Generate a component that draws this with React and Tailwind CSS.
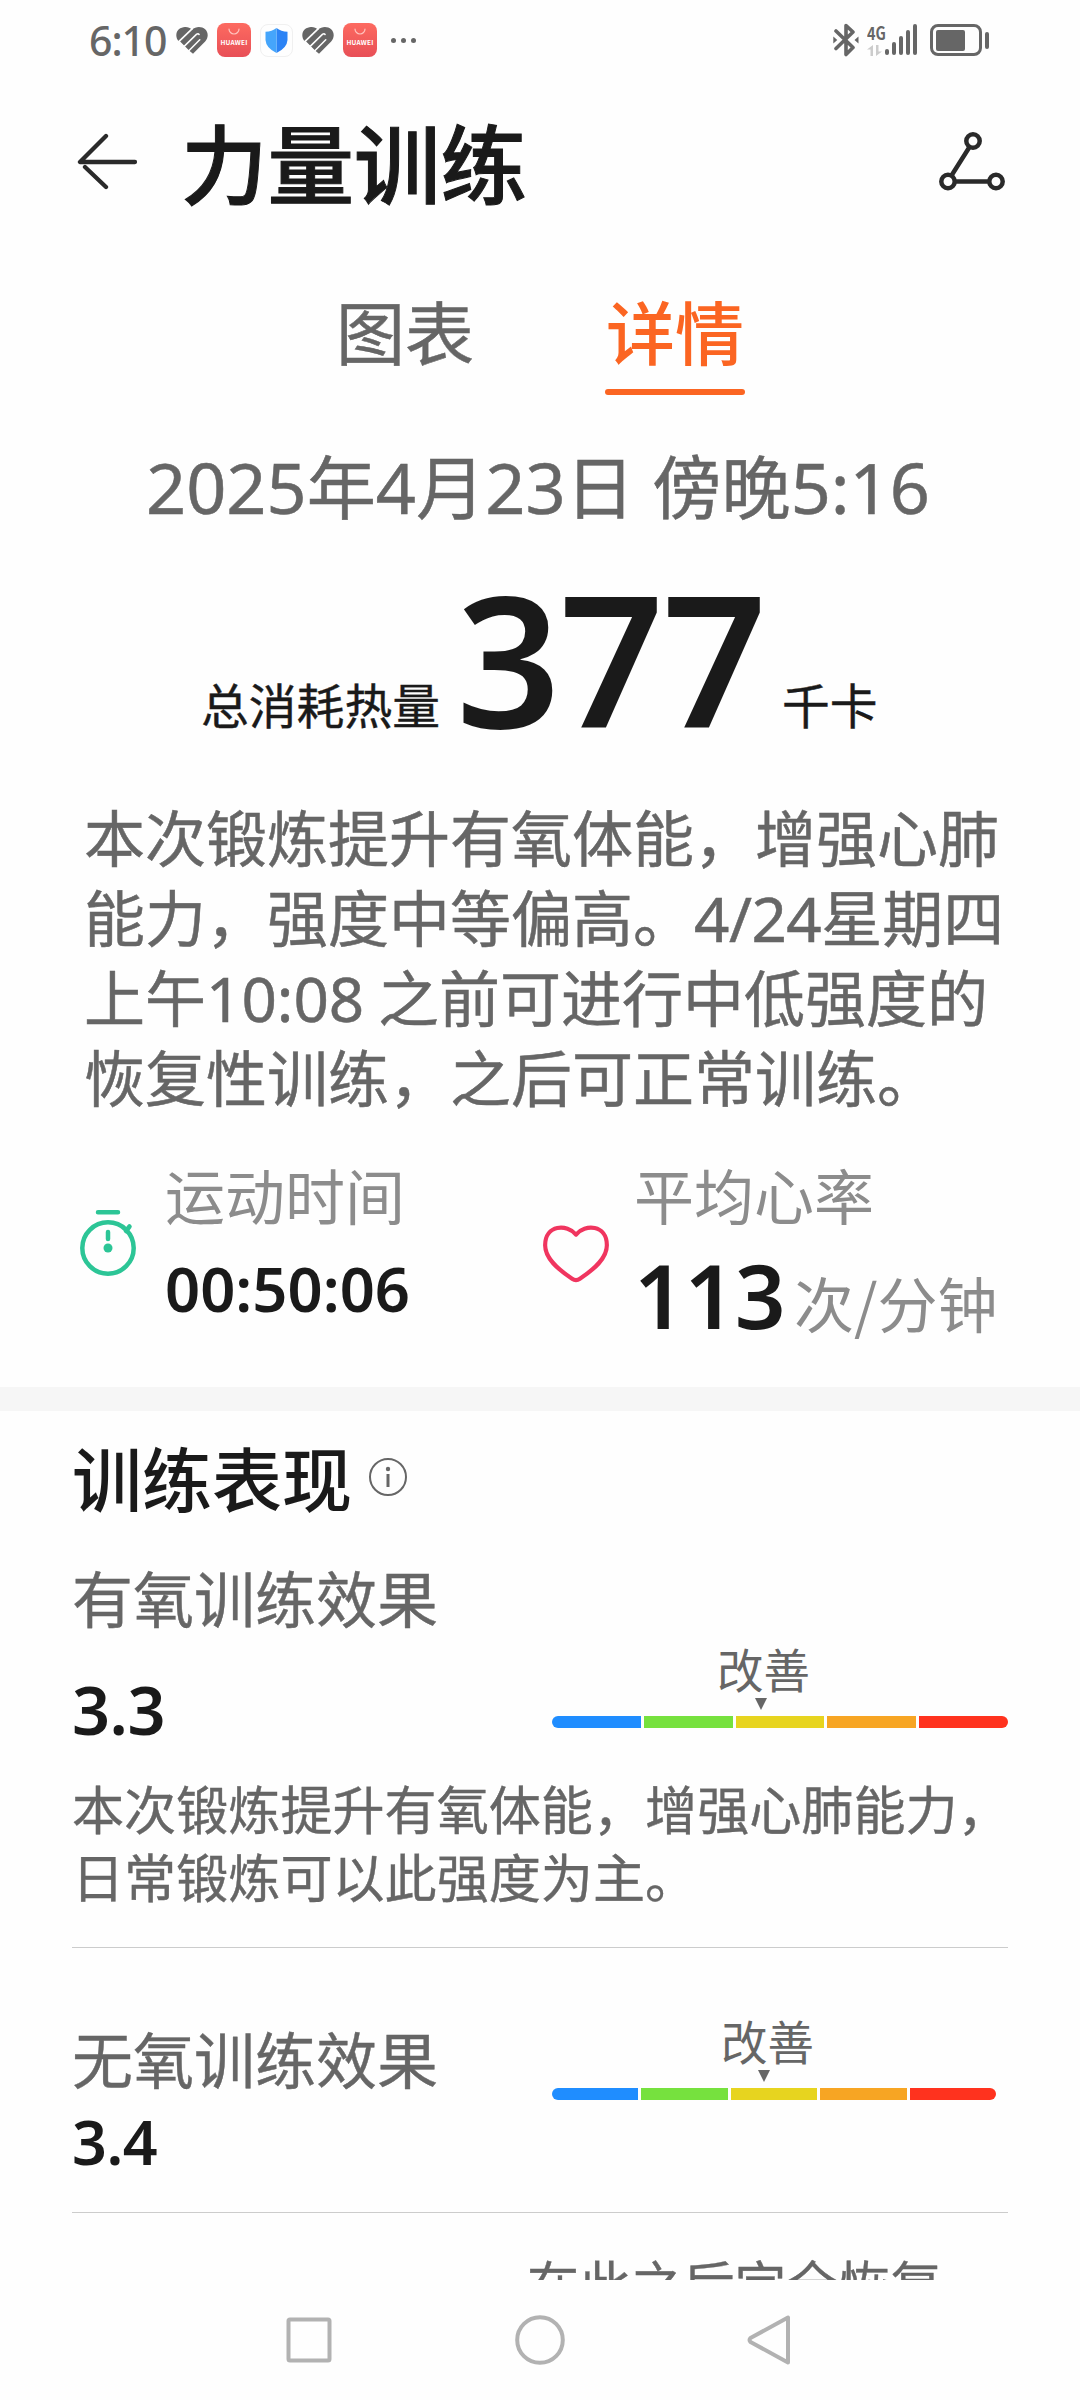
import React from "react";

const SEGMENTS = ["bg-[#1f8dff]", "bg-[#76e13e]", "bg-[#e7d41f]", "bg-[#f7a523]", "bg-[#ff321e]"];

function Num({ children, className = "" }) {
  return <span className={`font-['Noto_Sans',sans-serif] text-[1.015em] leading-none ${className}`}>{children}</span>;
}

function HealthIcon({ className }) {
  return (
    <svg viewBox="0 0 94 80" className={className} fill="none">
      <path d="M47 8C58-2 76-2 86 7c10 10 10 25 0 36L50 79 40 71 11 42 8 43C-3 31-1 15 8 7 20-3 37-2 47 8z" fill="#666" />
      <path d="M4 47 48 5" stroke="#fefefe" strokeWidth="5" />
      <path d="M20 61 60 22q5-4 8 0" stroke="#fefefe" strokeWidth="4.500" strokeLinecap="round" />
      <path d="M34 74 70 38" stroke="#fefefe" strokeWidth="4.500" strokeLinecap="round" />
    </svg>
  );
}

function HuaweiBadge({ className }) {
  return (
    <div className={`flex h-[34px] w-[34px] flex-col items-center rounded-[8px] bg-linear-to-b from-[#fd6a60] to-[#e84f57] ${className}`}>
      <svg viewBox="0 0 12 8" className="mt-[5px] h-[8px] w-[12px]" fill="none">
        <path d="M1 1a5 5 0 0 0 10 0" stroke="#ffc4bf" strokeWidth="1.2" strokeLinecap="round" />
      </svg>
      <span className="mt-[3px] text-[6.500px] leading-[7px] font-bold tracking-[0.2px] text-white">HUAWEI</span>
    </div>
  );
}

function StatusBar() {
  return (
    <div className="flex h-[80px] items-center pl-[89px] text-[#666]">
      <span className="w-[87px] font-['Noto_Sans',sans-serif] text-[41px] leading-[80px] font-medium tracking-[-1px]">6:10</span>
      <HealthIcon className="h-[27px] w-[32px]" />
      <HuaweiBadge className="ml-[9px]" />
      <div className="ml-[9px] flex h-[33px] w-[33px] items-center justify-center rounded-[8px] border border-[#f0f0f0]">
        <svg viewBox="0 0 23 25" className="h-[25px] w-[23px]">
          <path d="M11.5 0Q16 3.500 22.500 3.800V12Q22 20 11.500 25z" fill="#2c83f5" />
          <path d="M11.500 0Q7 3.500.5 3.800V12Q1 20 11.500 25z" fill="#45a5fb" />
        </svg>
      </div>
      <HealthIcon className="ml-[9px] h-[27px] w-[32px]" />
      <HuaweiBadge className="ml-[9px]" />
      <div className="ml-[14px] flex gap-[5px]">
        <i className="h-[5px] w-[5px] rounded-full bg-[#666]" />
        <i className="h-[5px] w-[5px] rounded-full bg-[#666]" />
        <i className="h-[5px] w-[5px] rounded-full bg-[#666]" />
      </div>
      <svg viewBox="0 0 26 34" className="ml-auto h-[34px] w-[26px]" fill="none" stroke="#666" strokeWidth="3.600" strokeLinejoin="round" strokeLinecap="round">
        <path d="M3 8 20 24.500 13 31.500V2.500L20 9 3 25.500" />
        <path d="m.3 13.500 4 3.500-4 3.500zM25.500 13.500l-4 3.500 4 3.500z" fill="#666" stroke="none" />
      </svg>
      <div className="ml-[8px] flex h-[34px] w-[18px] flex-col">
        <span className="mt-[1px] origin-left scale-x-[0.8] text-[18px] leading-[16px] font-bold">4G</span>
        <svg viewBox="0 0 16 11" className="mt-[5px] h-[11px] w-[16px]" fill="#ccc">
          <path d="M0 4.500 6 0v11H3.500V4.500zM15 6.500 9 11V0h2.500v6.500z" />
        </svg>
      </div>
      <div className="mb-[1px] flex h-[31px] items-end gap-[3px]">
        <i className="h-[6px] w-[4px] rounded-full bg-[#666]" />
        <i className="h-[13px] w-[4px] rounded-full bg-[#666]" />
        <i className="h-[19px] w-[4px] rounded-full bg-[#666]" />
        <i className="h-[25px] w-[4px] rounded-full bg-[#666]" />
        <i className="h-[31px] w-[4px] rounded-full bg-[#666]" />
      </div>
      <div className="ml-[13px] h-[32px] w-[52px] rounded-[8px] border-[3px] border-[#666] p-[2.500px]">
        <div className="h-[21px] w-[29px] rounded-[2px] bg-[#666]" />
      </div>
      <i className="mr-[91px] ml-[3px] h-[17px] w-[4px] rounded-full bg-[#666]" />
    </div>
  );
}

function Header() {
  return (
    <div className="flex h-[162px] items-center pl-[76px] text-[#1a1a1a]">
      <svg viewBox="0 0 62 58" className="h-[58px] w-[62px]" fill="none" stroke="#2a2a2a" strokeWidth="4.300" strokeLinecap="round" strokeLinejoin="round">
        <path d="M30 4 4 30h55M9 35l21 20" />
      </svg>
      <h1 className="ml-[43px] text-[86.500px] leading-[120px] font-medium [-webkit-text-stroke:1px_#1a1a1a]">力量训练</h1>
      <svg viewBox="0 0 68 60" className="mr-[73px] ml-auto h-[60px] w-[68px]" fill="none" stroke="#2a2a2a" strokeWidth="4.500">
        <circle cx="34" cy="10" r="6.700" />
        <circle cx="9" cy="50.500" r="6.700" />
        <circle cx="57" cy="50.500" r="6.700" />
        <path d="M30.500 16 12.500 44.500M16 50.500h34" />
      </svg>
    </div>
  );
}

function Gauge({ label, className, markerClass, labelClass, segmentClass }) {
  return (
    <div className={className}>
      <div className={`text-[46.500px] leading-[50px] text-[#666] ${labelClass}`}>{label}</div>
      <svg viewBox="0 0 12 12" className={`mt-[5px] h-[12px] w-[12px] ${markerClass}`}>
        <path d="M0 0h12L6 12z" fill="#666" />
      </svg>
      <div className="mt-[6px] flex gap-[3px] overflow-hidden rounded-full">
        {SEGMENTS.map((color) => (
          <i key={color} className={`h-[12px] ${segmentClass} ${color}`} />
        ))}
      </div>
    </div>
  );
}

export default function App() {
  return (
    <div className="flex h-[2400px] w-[1080px] flex-col overflow-hidden bg-[#fefefe] font-['Noto_Sans_CJK_SC',sans-serif] whitespace-nowrap">
      <div className="h-[2280px] overflow-hidden">
        <StatusBar />
        <Header />

        <div className="mt-[46px] flex gap-[130px] pl-[335px] text-center text-[69px] leading-[84px]">
          <div className="w-[140px] text-[#666] [-webkit-text-stroke:0.5px_#666]">图表</div>
          <div className="w-[140px] font-medium text-[#fb6522]">
            详情
            <div className="mt-[17px] h-[6px] rounded-full bg-[#fb6522]" />
          </div>
        </div>

        <div className="mt-[39px] pl-[146px] text-[69.200px] leading-[100px] text-[#666] [-webkit-text-stroke:0.5px_#666] [word-spacing:2px]">
          <Num>2025</Num>年<Num>4</Num>月<Num>23</Num>日 傍晚<Num>5:16</Num>
        </div>

        <div className="mt-[33px] flex h-[173px] items-baseline pl-[201px] text-[#1a1a1a]">
          <span className="w-[255px] -translate-y-1 text-[47.800px] [-webkit-text-stroke:0.4px_#1a1a1a]">总消耗热量</span>
          <span className="w-[326px] font-['Noto_Sans',sans-serif] text-[183px] leading-[180px] font-semibold tracking-[-1.500px]">377</span>
          <span className="-translate-y-1 text-[47.800px] [-webkit-text-stroke:0.4px_#1a1a1a]">千卡</span>
        </div>

        <div className="mt-[56px] pl-[84px] text-[61px] leading-[80px] text-[#666] [-webkit-text-stroke:0.5px_#666]">
          <p>本次锻炼提升有氧体能，增强心肺</p>
          <p>能力，强度中等偏高。<Num className="tracking-[-0.5px]">4/24</Num>星期四</p>
          <p>上午<Num>10:08</Num> 之前可进行中低强度的</p>
          <p>恢复性训练，之后可正常训练。</p>
        </div>

        <div className="mt-[38px] flex h-[233px] pl-[79px] text-[60px] text-[#8c8c8c]">
          <svg viewBox="0 0 58 70" className="mt-[54px] h-[70px] w-[58px]" fill="none" stroke="#2cc596" strokeWidth="4.500" strokeLinecap="round">
            <path d="M19 4.200h20M29 24v7M47 23l3.500-4.500" />
            <circle cx="29" cy="40" r="25.700" />
            <circle cx="29" cy="40" r="4.500" fill="#2cc596" stroke="none" />
          </svg>
          <div className="ml-[28px] w-[378px]">
            <div className="leading-[80px]">运动时间</div>
            <div className="mt-[14px] font-['Noto_Sans',sans-serif] text-[61.500px] leading-[80px] font-semibold text-[#1a1a1a]">00:50:06</div>
          </div>
          <svg viewBox="0 0 68 60" className="mt-[70px] h-[59px] w-[66px]" fill="none" stroke="#f0355f" strokeWidth="4.300" strokeLinejoin="round">
            <path d="M34 10.500C25-.5 2.200 0 2.200 21.500 2.200 35 15 46 30 56q4 2.800 8 0C53 46 65.800 35 65.800 21.500 65.800 0 43-.5 34 10.500z" />
          </svg>
          <div className="ml-[25px]">
            <div className="leading-[80px]">平均心率</div>
            <div className="mt-[11px] flex items-baseline leading-[100px]">
              <span className="w-[160px] font-['Noto_Sans',sans-serif] text-[89px] font-semibold tracking-[-0.5px] text-[#1a1a1a]">113</span>
              <span className="-translate-y-px">次/分钟</span>
            </div>
          </div>
        </div>

        <div className="h-[24px] bg-[#f6f6f6]" />

        <div className="px-[72px] pt-[26px] text-[61px] text-[#666]">
          <div className="flex">
            <h2 className="text-[70px] leading-[80px] font-medium text-[#1a1a1a]">训练表现</h2>
            <svg viewBox="0 0 40 40" className="mt-[20px] ml-[16px] h-[40px] w-[40px]" fill="none" stroke="#666" strokeWidth="2">
              <circle cx="20" cy="20" r="18" />
              <circle cx="20" cy="12" r="2.200" fill="#666" stroke="none" />
              <path d="M20 17v13" strokeWidth="3" />
            </svg>
          </div>
          <div className="mt-[40px] leading-[80px] [-webkit-text-stroke:0.4px_#666]">有氧训练效果</div>
          <div className="flex h-[107px]">
            <div className="mt-[32px] w-[480px] font-['Noto_Sans',sans-serif] text-[66.500px] leading-[80px] font-semibold tracking-[-0.5px] text-[#1a1a1a]">3.3</div>
            <Gauge label="改善" className="mt-[6px] w-[456px]" labelClass="ml-[165px]" markerClass="ml-[203px]" segmentClass="w-[88.800px]" />
          </div>
          <div className="mt-[30px] text-[52.100px] leading-[68px] [-webkit-text-stroke:0.4px_#666]">
            <p>本次锻炼提升有氧体能，增强心肺能力，</p>
            <p>日常锻炼可以此强度为主。</p>
          </div>
          <div className="mt-[37px] h-px bg-[#ccc]" />
          <div className="flex h-[264px]">
            <div className="mt-[70px] w-[480px]">
              <div className="leading-[80px] [-webkit-text-stroke:0.4px_#666]">无氧训练效果</div>
              <div className="mt-[9px] font-['Noto_Sans',sans-serif] text-[61px] leading-[70px] font-semibold tracking-[-0.5px] text-[#1a1a1a]">3.4</div>
            </div>
            <Gauge label="改善" className="mt-[67px] w-[444px]" labelClass="ml-[169px]" markerClass="ml-[206px]" segmentClass="w-[86.400px]" />
          </div>
          <div className="h-px bg-[#ccc]" />
          <div className="mt-[40px] pl-[455px] text-[51.900px] leading-[60px] [-webkit-text-stroke:0.4px_#666]">在此之后完全恢复</div>
        </div>
      </div>

      <div className="flex h-[120px] items-center pl-[286px]">
        <svg viewBox="0 0 46 46" className="h-[46px] w-[46px]" fill="none" stroke="#b2b2b2" strokeWidth="4">
          <rect x="2.500" y="2.500" width="41" height="41" rx="1.500" />
        </svg>
        <svg viewBox="0 0 50 50" className="ml-[183px] h-[50px] w-[50px]" fill="none" stroke="#b2b2b2" strokeWidth="4">
          <circle cx="25" cy="25" r="22.800" />
        </svg>
        <svg viewBox="0 0 44 52" className="ml-[182px] h-[52px] w-[44px]" fill="none" stroke="#b2b2b2" strokeWidth="4" strokeLinejoin="round">
          <path d="M41 3.500v45L3.500 28q-2-2 0-4z" />
        </svg>
      </div>
    </div>
  );
}
